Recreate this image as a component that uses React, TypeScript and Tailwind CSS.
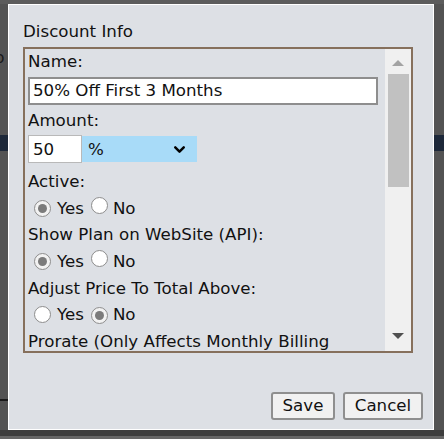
import { ChevronDown } from 'lucide-react';

function Radio({ checked }: { checked: boolean }) {
  return (
    <span
      className={`inline-flex w-[17px] h-[17px] shrink-0 items-center justify-center rounded-full border border-[#8d8d8d] ${
        checked ? 'bg-[#f2f2f2]' : 'bg-white'
      }`}
    >
      {checked && <span className="w-[9px] h-[9px] rounded-full bg-[#7b7b7b]" />}
    </span>
  );
}

function YesNo({ value }: { value: boolean }) {
  return (
    <div className="flex h-[32px] items-center pl-[6px]">
      <Radio checked={value} />
      <span className="ml-[6px]">Yes</span>
      <span className="ml-[7px]">
        <Radio checked={!value} />
      </span>
      <span className="ml-[5px]">No</span>
    </div>
  );
}

function Label({ children, className = '' }: { children: React.ReactNode; className?: string }) {
  return <div className={`h-[21.33px] whitespace-nowrap ${className}`}>{children}</div>;
}

export default function App() {
  return (
    <div className="relative w-[444px] h-[439px] overflow-hidden bg-[#535353] font-['DejaVu_Sans',sans-serif] text-[16.67px] leading-[21.33px] text-[#111]">
      {/* page behind the dialog */}
      <div className="absolute left-0 right-0 top-0 h-[4px] bg-[#5c5c5c]" />
      <div className="absolute left-0 right-0 top-[135px] h-[16px] bg-[#1d2839]" />
      <span className="absolute left-[-6px] top-[47px] text-[#1a1a1a]">b</span>
      <div className="absolute left-0 w-[8px] top-[399px] h-[2px] bg-[#1a1a1a]" />
      <div className="absolute left-0 right-0 top-[430px] h-[6px] bg-[#3d3d3d]" />
      <div className="absolute left-0 right-0 top-[436px] bottom-0 bg-[#666666]" />

      {/* dialog */}
      <div className="absolute left-[8px] top-[4px] w-[426px] h-[426px] border border-white bg-[#dde0e5] flex flex-col pl-[14px] pr-[20px] pt-[15.5px]">
        <Label>Discount Info</Label>

        <div className="mt-[5px] h-[306px] w-[390px] shrink-0 border-2 border-[#86705c] flex">
          <div className="flex-1 overflow-hidden pl-[3px] pt-[2.5px]">
            <Label>Name:</Label>
            <div className="mt-[4px] h-[28px] w-[350px] border-2 border-[#8e8e8e] bg-white pl-[3px] flex items-center whitespace-nowrap">
              50% Off First 3 Months
            </div>

            <Label className="mt-[5.5px]">Amount:</Label>
            <div className="mt-[4px] flex h-[28px]">
              <div className="w-[54px] border border-[#b9b9b9] bg-white pl-[4px] flex items-center">50</div>
              <div className="w-[115px] my-[1px] bg-[#a8dbf8] pl-[6px] pr-[9px] flex items-center justify-between">
                <span>%</span>
                <ChevronDown size={17} strokeWidth={3.5} color="#000" />
              </div>
            </div>

            <Label className="mt-[7.5px]">Active:</Label>
            <YesNo value={true} />
            <Label>Show Plan on WebSite (API):</Label>
            <YesNo value={true} />
            <Label>Adjust Price To Total Above:</Label>
            <YesNo value={false} />
            <Label>Prorate (Only Affects Monthly Billing</Label>
          </div>

          {/* scrollbar */}
          <div className="w-[26px] shrink-0 bg-[#f0f0f0] flex flex-col">
            <div className="h-[24px] flex items-center justify-center pt-[4px]">
              <span className="w-0 h-0 border-l-[6px] border-r-[6px] border-b-[6px] border-l-transparent border-r-transparent border-b-[#a3a3a3]" />
            </div>
            <div className="mt-[1px] ml-[3px] mr-[2px] h-[113px] bg-[#c1c1c1]" />
            <div className="flex-1" />
            <div className="h-[24px] flex items-center justify-center pb-[5px]">
              <span className="w-0 h-0 border-l-[6px] border-r-[6px] border-t-[6px] border-l-transparent border-r-transparent border-t-[#505050]" />
            </div>
          </div>
        </div>

        <div className="flex-1" />
        <div className="flex justify-end gap-[8px] pb-[9px] pr-[-10px] mr-[-10px]">
          <button className="h-[28px] w-[64px] rounded-[3px] border-2 border-[#8f8f8f] bg-[#f1f1f1] text-[#111]">
            Save
          </button>
          <button className="h-[28px] w-[80px] rounded-[3px] border-2 border-[#8f8f8f] bg-[#f1f1f1] text-[#111]">
            Cancel
          </button>
        </div>
      </div>
    </div>
  );
}
